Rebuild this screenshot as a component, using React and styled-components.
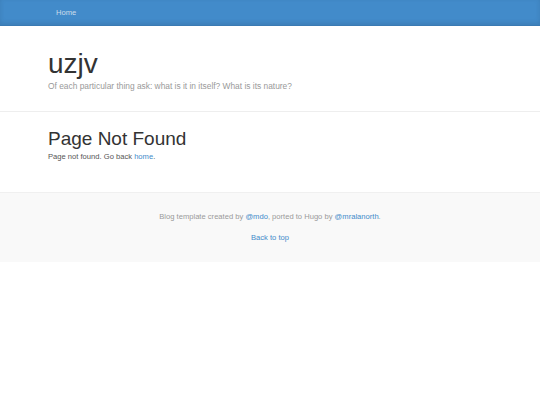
import styled, { createGlobalStyle } from "styled-components";

const Global = createGlobalStyle`
  body {
    margin: 0;
    font-family: "Liberation Sans", Arial, sans-serif;
    background: #fff;
    color: #555;
  }
`;

const Nav = styled.nav`
  background-color: #428bca;
  border-bottom: 1px solid #3a7ab3;
  box-shadow: inset 0 -2px 5px rgba(0, 0, 0, 0.1);
  height: 25px;
`;

const Container = styled.div`
  padding: 0 48px;
`;

const NavLink = styled.a`
  display: inline-block;
  padding: 0 8px;
  line-height: 25px;
  font-size: 7.6px;
  color: #cdddeb;
  text-decoration: none;
`;

const Header = styled.header`
  padding: 21px 0 19px;
  border-bottom: 1px solid #eee;
`;

const Title = styled.h1`
  margin: 0;
  font-size: 28px;
  font-weight: 400;
  line-height: 34px;
  color: #333;
`;

const Lead = styled.p`
  margin: 0;
  font-size: 8.4px;
  line-height: 11px;
  color: #999;
`;

const Main = styled.main`
  padding: 15px 0 30px;
`;

const Heading = styled.h2`
  margin: 0;
  font-size: 19px;
  font-weight: 400;
  line-height: 24px;
  color: #333;
`;

const Text = styled.p`
  margin: 0;
  font-size: 7.6px;
  line-height: 11px;
  color: #555;
`;

const Link = styled.a`
  color: #428bca;
  text-decoration: none;
`;

const Footer = styled.footer`
  background-color: #f9f9f9;
  border-top: 1px solid #f0f0f0;
  padding: 18px 0 19px;
  text-align: center;
  font-size: 7.6px;
  line-height: 11px;
  color: #999;
`;

const FooterLine = styled.p`
  margin: 0 0 10px;
  &:last-child {
    margin: 0;
  }
`;

export default function App() {
  return (
    <>
      <Global />
      <Nav>
        <Container>
          <NavLink href="#">Home</NavLink>
        </Container>
      </Nav>
      <Header>
        <Container>
          <Title>uzjv</Title>
          <Lead>Of each particular thing ask: what is it in itself? What is its nature?</Lead>
        </Container>
      </Header>
      <Main>
        <Container>
          <Heading>Page Not Found</Heading>
          <Text>
            Page not found. Go back <Link href="#">home</Link>.
          </Text>
        </Container>
      </Main>
      <Footer>
        <FooterLine>
          Blog template created by <Link href="#">@mdo</Link>, ported to Hugo by{" "}
          <Link href="#">@mralanorth</Link>.
        </FooterLine>
        <FooterLine>
          <Link href="#">Back to top</Link>
        </FooterLine>
      </Footer>
    </>
  );
}
